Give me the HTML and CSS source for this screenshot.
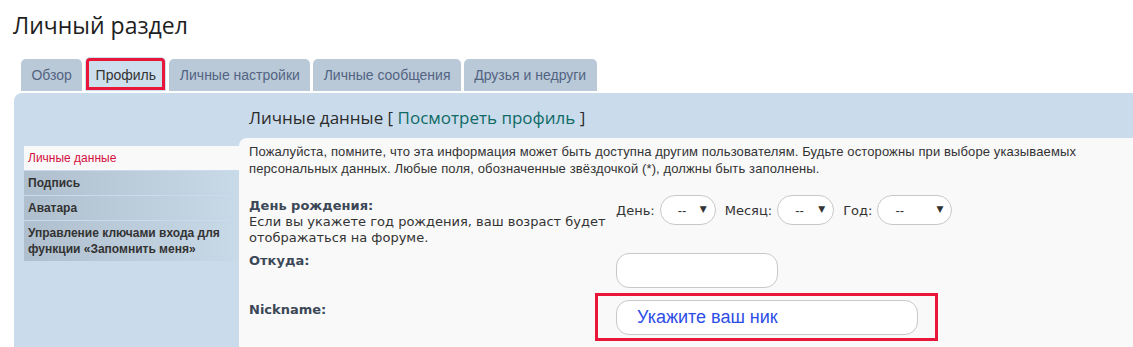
FILE: index.html
```html
<!DOCTYPE html>
<html lang="ru">
<head>
    <meta charset="UTF-8">
    <title>Личный раздел</title>
    <link rel="stylesheet" href="styles.css">
</head>
<body>
    <div class="page">
        <h1 class="page-title">Личный раздел</h1>

        <ul class="tabs">
            <li class="tab"><a href="#">Обзор</a></li>
            <li class="tab active"><a href="#">Профиль</a></li>
            <li class="tab"><a href="#">Личные настройки</a></li>
            <li class="tab"><a href="#">Личные сообщения</a></li>
            <li class="tab"><a href="#">Друзья и недруги</a></li>
        </ul>

        <div class="panel">
            <ul class="side-menu">
                <li class="active"><a href="#">Личные данные</a></li>
                <li><a href="#">Подпись</a></li>
                <li><a href="#">Аватара</a></li>
                <li><a href="#">Управление ключами входа для функции «Запомнить меня»</a></li>
            </ul>

            <div class="main">
                <h2 class="section-title">Личные данные [ <a href="#">Посмотреть профиль</a> ]</h2>

                <div class="content">
                    <p class="intro">Пожалуйста, помните, что эта информация может быть доступна другим пользователям. Будьте осторожны при выборе указываемых персональных данных. Любые поля, обозначенные звёздочкой (*), должны быть заполнены.</p>

                    <div class="form-row">
                        <div class="label">
                            <b>День рождения:</b><br>
                            Если вы укажете год рождения, ваш возраст будет отображаться на форуме.
                        </div>
                        <div class="field date-fields">
                            <span>День:</span>
                            <span class="select-wrap day"><select><option>--</option></select></span>
                            <span>Месяц:</span>
                            <span class="select-wrap month"><select><option>--</option></select></span>
                            <span>Год:</span>
                            <span class="select-wrap year"><select><option>--</option></select></span>
                        </div>
                    </div>

                    <div class="form-row">
                        <div class="label"><b>Откуда:</b></div>
                        <div class="field">
                            <input type="text" class="text-input short">
                        </div>
                    </div>

                    <div class="form-row nick-row">
                        <div class="label"><b>Nickname:</b></div>
                        <div class="field">
                            <div class="highlight">
                                <input type="text" class="text-input long" placeholder="Укажите ваш ник">
                            </div>
                        </div>
                    </div>
                </div>
            </div>
        </div>
    </div>
</body>
</html>
```

FILE: styles.css
```css
body {
    margin: 0;
    background-color: #fff;
    color: #333;
    font-family: "Liberation Sans", Arial, sans-serif;
}
.page {
    padding-left: 14px;
}
.page-title {
    margin: 0;
    padding: 9px 0 0 0;
    margin-left: -1px;
    font-family: "Open Sans", sans-serif;
    font-size: 23px;
    font-weight: normal;
    line-height: 32px;
    color: #1e1e1e;
}
.tabs {
    list-style: none;
    margin: 16px 0 0 7px;
    padding: 0;
    display: flex;
    align-items: flex-end;
    gap: 3px;
    height: 34px;
}
.tab a {
    display: block;
    height: 32px;
    line-height: 32px;
    padding: 0 10.4px;
    background-color: #b9c9d8;
    border-radius: 5px 5px 0 0;
    color: #536482;
    font-size: 14px;
    text-decoration: none;
}
/* активная вкладка чуть выше остальных */
.tab.active a {
    height: 34px;
    line-height: 36px;
    background-color: #cddeed;
    color: #333;
    outline: 3px solid #e8173a;
    outline-offset: -4px;
}
.panel {
    margin-top: 2px;
    background-color: #cadceb;
    border-radius: 8px 0 0 0;
    padding-left: 10px;
    display: grid;
    grid-template-columns: 215px 1fr;
    min-height: 260px;
}
.side-menu {
    list-style: none;
    margin: 53px 0 0 0;
    padding: 0;
}
.side-menu li {
    margin-bottom: 1px;
}
.side-menu a {
    display: block;
    padding: 4px 4px;
    line-height: 16px;
    font-size: 12px;
    font-weight: bold;
    color: #333;
    text-decoration: none;
    background: linear-gradient(to right, #afbfcd, #c8d9e8);
}
.side-menu li.active a {
    background: #f9f9f9;
    color: #d31141;
    font-weight: normal;
}
.section-title {
    margin: 0;
    padding: 13px 0 0 10px;
    height: 32px;
    font-family: "Open Sans", sans-serif;
    font-size: 17px;
    font-weight: normal;
    line-height: 24px;
    color: #2b2b2b;
}
.section-title a {
    color: #0f6a66;
    text-decoration: none;
}
.content {
    background-color: #f9f9f9;
    border-radius: 8px 0 0 0;
    padding: 5px 10px 20px 10px;
}
.intro {
    margin: 0 0 21px 0;
    font-size: 13px;
    letter-spacing: 0.12px;
    line-height: 17px;
    color: #333;
}
.form-row {
    display: grid;
    grid-template-columns: 367px 1fr;
    margin-bottom: 7px;
}
.label {
    font-family: "DejaVu Sans", Verdana, sans-serif;
    font-size: 13px;
    line-height: 16px;
    color: #333;
}
.label b {
    color: #3c4857;
}
.date-fields {
    display: flex;
    align-items: center;
    gap: 5px;
    font-family: "DejaVu Sans", Verdana, sans-serif;
    font-size: 13px;
    height: 30px;
    margin-top: -3px;
}
.select-wrap {
    position: relative;
    display: inline-block;
    margin-right: 4px;
}
.select-wrap select {
    appearance: none;
    -webkit-appearance: none;
    height: 30px;
    border: 1px solid #c8c8c8;
    border-radius: 15px;
    background-color: #fff;
    padding: 0 0 0 17px;
    font-family: "Liberation Sans", Arial, sans-serif;
    font-size: 13px;
    color: #333;
}
.select-wrap::after {
    content: "▼";
    position: absolute;
    right: 9px;
    top: 9px;
    font-size: 9px;
    color: #333;
    pointer-events: none;
}
.day select { width: 56px; }
.month select { width: 57px; }
.year select { width: 75px; }
.text-input {
    box-sizing: border-box;
    height: 35px;
    border: 1px solid #c8c8c8;
    border-radius: 13px;
    background-color: #fff;
    padding: 0 20px;
    font-family: "Liberation Sans", Arial, sans-serif;
    font-size: 18px;
}
.text-input::placeholder {
    color: #2d4ee6;
}
.text-input.short { width: 162px; }
.text-input.long { width: 302px; }
.nick-row {
    margin-top: -2px;
}
.nick-row .label {
    padding-top: 9px;
}
.highlight {
    display: inline-block;
    margin-left: -21px;
    padding: 4px 17px 3px 18px;
    border: 3px solid #e8173a;
}
```
